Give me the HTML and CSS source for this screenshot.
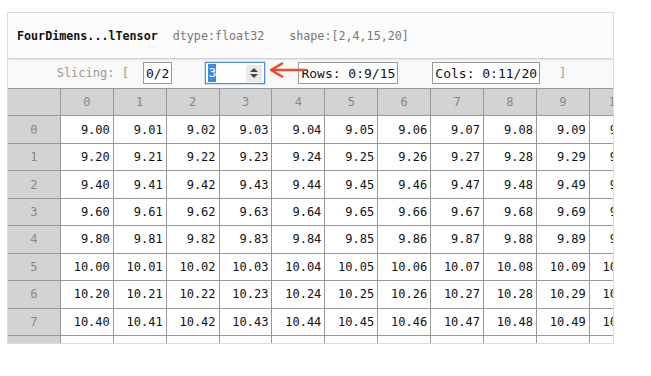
FILE: index.html
```html
<!DOCTYPE html>
<html>
<head>
<meta charset="utf-8">
<link rel="stylesheet" href="styles.css">
</head>
<body>
<div class="widget">
  <div class="header">
    <span class="name">FourDimens...lTensor</span>
    <span class="meta dtype">dtype:float32</span>
    <span class="meta shape">shape:[2,4,15,20]</span>
  </div>
  <div class="slicer">
    <span class="label">Slicing: [</span>
    <span class="box dim">0/2</span>
    <span class="box numin"><span class="sel">3</span><span class="spin"><i class="up"></i><i class="down"></i></span></span>
    <span class="box rows">Rows: 0:9/15</span>
    <span class="box cols">Cols: 0:11/20</span>
    <span class="label close">]</span>
  </div>
  <div class="grid-wrap">
    <table class="grid">
      <thead>
        <tr><th class="corner"></th><th>0</th><th>1</th><th>2</th><th>3</th><th>4</th><th>5</th><th>6</th><th>7</th><th>8</th><th>9</th><th>10</th><th>11</th></tr>
      </thead>
      <tbody>
        <tr><th>0</th><td>9.00</td><td>9.01</td><td>9.02</td><td>9.03</td><td>9.04</td><td>9.05</td><td>9.06</td><td>9.07</td><td>9.08</td><td>9.09</td><td>9.10</td><td>9.11</td></tr>
        <tr><th>1</th><td>9.20</td><td>9.21</td><td>9.22</td><td>9.23</td><td>9.24</td><td>9.25</td><td>9.26</td><td>9.27</td><td>9.28</td><td>9.29</td><td>9.30</td><td>9.31</td></tr>
        <tr><th>2</th><td>9.40</td><td>9.41</td><td>9.42</td><td>9.43</td><td>9.44</td><td>9.45</td><td>9.46</td><td>9.47</td><td>9.48</td><td>9.49</td><td>9.50</td><td>9.51</td></tr>
        <tr><th>3</th><td>9.60</td><td>9.61</td><td>9.62</td><td>9.63</td><td>9.64</td><td>9.65</td><td>9.66</td><td>9.67</td><td>9.68</td><td>9.69</td><td>9.70</td><td>9.71</td></tr>
        <tr><th>4</th><td>9.80</td><td>9.81</td><td>9.82</td><td>9.83</td><td>9.84</td><td>9.85</td><td>9.86</td><td>9.87</td><td>9.88</td><td>9.89</td><td>9.90</td><td>9.91</td></tr>
        <tr><th>5</th><td>10.00</td><td>10.01</td><td>10.02</td><td>10.03</td><td>10.04</td><td>10.05</td><td>10.06</td><td>10.07</td><td>10.08</td><td>10.09</td><td>10.10</td><td>10.11</td></tr>
        <tr><th>6</th><td>10.20</td><td>10.21</td><td>10.22</td><td>10.23</td><td>10.24</td><td>10.25</td><td>10.26</td><td>10.27</td><td>10.28</td><td>10.29</td><td>10.30</td><td>10.31</td></tr>
        <tr><th>7</th><td>10.40</td><td>10.41</td><td>10.42</td><td>10.43</td><td>10.44</td><td>10.45</td><td>10.46</td><td>10.47</td><td>10.48</td><td>10.49</td><td>10.50</td><td>10.51</td></tr>
        <tr><th>8</th><td>10.60</td><td>10.61</td><td>10.62</td><td>10.63</td><td>10.64</td><td>10.65</td><td>10.66</td><td>10.67</td><td>10.68</td><td>10.69</td><td>10.70</td><td>10.71</td></tr>
      </tbody>
    </table>
  </div>
</div>
<svg class="arrow" width="44" height="22" viewBox="0 0 44 22">
  <path d="M40 10 L6.5 10 M17 3.5 L6 10 L17 16.5" fill="none" stroke="#ea4b2a" stroke-width="2.6" stroke-linecap="round" stroke-linejoin="round"/>
</svg>
</body>
</html>
```
FILE: styles.css
```css
html, body {
  margin: 0;
  background: #fff;
}
body {
  padding: 12px 0 0 7px;
  font-family: "DejaVu Sans Mono", "Liberation Mono", monospace;
  position: relative;
}
.widget {
  width: 605px;
  height: 330px;
  border: 1px solid #dcdcdc;
  overflow: hidden;
  display: flex;
  flex-direction: column;
}
.header {
  flex: none;
  height: 45px;
  display: flex;
  align-items: center;
  padding-left: 9px;
  background: #fcfcfc;
  box-shadow: 0 1px 2px rgba(0, 0, 0, 0.22);
  position: relative;
  z-index: 1;
  font-size: 11.7px;
}
.name {
  font-weight: bold;
  color: #111;
}
.meta {
  color: #777;
}
.dtype { margin-left: 15px; }
.shape { margin-left: 25px; }

.slicer {
  flex: none;
  height: 30px;
  display: flex;
  align-items: center;
  justify-content: center;
  background: #f8f8f8;
  padding-left: 2px;
}
.label {
  color: #999;
  font-size: 12px;
}
.slicer > .label:first-child { margin-right: 14px; }
.box {
  box-sizing: border-box;
  height: 22px;
  display: flex;
  align-items: center;
  padding: 0 2px;
  border: 1px solid #999;
  background: #fff;
  font-size: 13px;
  color: #111;
}
.dim { margin-right: 33px; }
.numin {
  width: 60px;
  margin-right: 33px;
  border-color: #4d8fdd;
  box-shadow: 0 0 0 1px rgba(77, 143, 221, 0.25);
}
.sel {
  background: #3a8be6;
  color: #fff;
  line-height: 18px;
}
.spin {
  margin-left: auto;
  width: 16px;
  height: 17px;
  background: #e9e9e9;
  display: flex;
  flex-direction: column;
  align-items: center;
  justify-content: center;
  gap: 2px;
}
.spin i {
  display: block;
  width: 0;
  height: 0;
  border-left: 4px solid transparent;
  border-right: 4px solid transparent;
}
.spin .up { border-bottom: 4px solid #444; }
.spin .down { border-top: 4px solid #444; }
.rows { margin-right: 34px; }
.cols { margin-right: 19px; }

.grid-wrap {
  flex: 1;
  overflow: hidden;
  border-top: 1px solid #999;
}
.grid {
  border-collapse: separate;
  border-spacing: 0;
  table-layout: fixed;
  width: 687.7px;
}
.grid th,
.grid td {
  box-sizing: border-box;
  width: 52.9px;
  height: 27.44px;
  padding: 0 3px 0 0;
  border-right: 1px solid #999;
  border-bottom: 1px solid #999;
  font-size: 12px;
  font-weight: normal;
  white-space: nowrap;
  overflow: hidden;
}
.grid td {
  text-align: right;
  color: #111;
  background: #fff;
}
.grid th {
  text-align: center;
  padding: 0;
  color: #888;
  background: #d3d3d3;
}
.arrow {
  position: absolute;
  left: 265px;
  top: 60px;
}
```
